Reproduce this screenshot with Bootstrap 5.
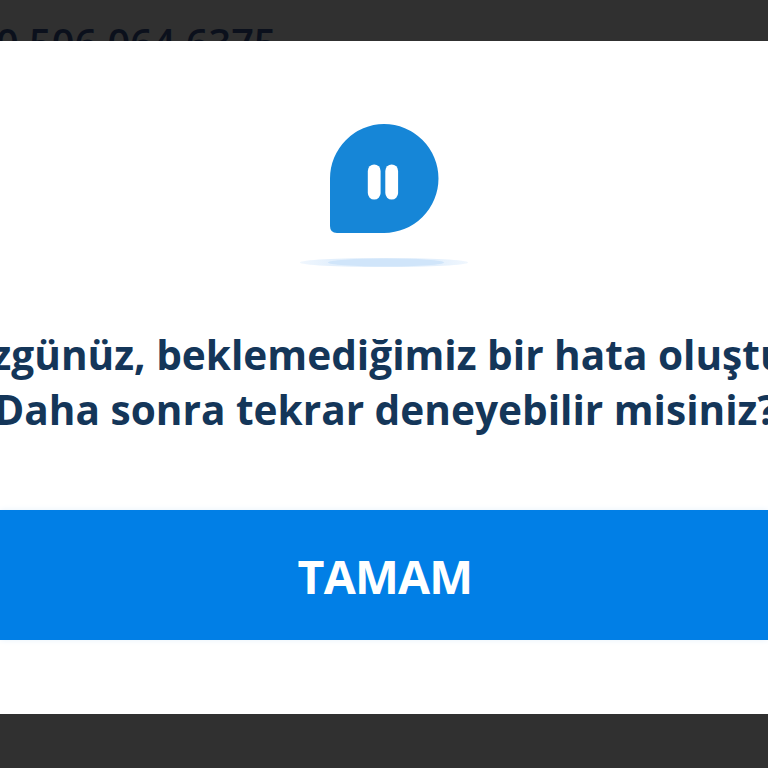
<!DOCTYPE html>
<html lang="tr">
<head>
  <meta charset="UTF-8" />
  <meta name="viewport" content="width=device-width, initial-scale=1.0" />
  <title>Hata</title>
  <link href="https://cdn.jsdelivr.net/npm/bootstrap@5.3.2/dist/css/bootstrap.min.css" rel="stylesheet" />
  <script src="https://cdn.jsdelivr.net/npm/bootstrap@5.3.2/dist/js/bootstrap.bundle.min.js"></script>
  <style>
    body {
      font-family: "Open Sans", "Noto Sans", sans-serif;
      background: #303030;
      height: 768px;
    }

    .phone-line {
      height: 41px;
      padding-top: 23px;
      font-size: 39.7px;
      line-height: 41px;
      font-weight: 600;
      color: #0b101c;
    }

    .phone-line span {
      margin-left: -4px;
    }

    .dialog-panel {
      height: 673px;
      padding-top: 83px;
    }

    .dialog-text {
      margin-top: 59px;
      font-size: 40.6px;
      line-height: 55px;
      font-weight: 700;
      color: #143659;
    }

    /* first line sits slightly left of centre */
    .first-line {
      padding-right: 9px;
    }

    .second-line {
      padding-left: 3px;
    }

    .btn-ok {
      height: 130px;
      margin-top: 73px;
      padding-top: 4px;
      padding-left: 8px;
      font-size: 46.5px;
      letter-spacing: -0.8px;
      font-weight: 700;
      background-color: #017fe6;
      box-shadow: 0 0 6px #e6f1fb;
    }
  </style>
</head>
<body class="d-flex flex-column overflow-hidden">
  <div class="phone-line overflow-hidden text-nowrap"><span>0 506 064 6375</span></div>

  <div class="dialog-panel bg-white d-flex flex-column align-items-center overflow-hidden">
    <svg width="170" height="144" viewBox="299 124 170 144">
      <defs>
        <linearGradient id="shadowFade">
          <stop offset="0" stop-color="#e6f1fd" stop-opacity=".6"/>
          <stop offset=".2" stop-color="#e2effc"/>
          <stop offset=".8" stop-color="#e2effc"/>
          <stop offset="1" stop-color="#e6f1fd" stop-opacity=".6"/>
        </linearGradient>
      </defs>
      <path d="M384 124a54.500 54.500 0 0 1 0 109h-47q-7 0-7-7v-47.500a54.500 54.500 0 0 1 54-54.500z" fill="#1686d7"/>
      <rect x="367.800" y="164.500" width="12.800" height="35" rx="6.400" fill="#fff"/>
      <rect x="385.300" y="164.500" width="12.800" height="35" rx="6.400" fill="#fff"/>
      <ellipse cx="384" cy="262.500" rx="84" ry="4.500" fill="url(#shadowFade)"/>
      <ellipse cx="386" cy="262.500" rx="58" ry="4" fill="#d0e5fa"/>
    </svg>
    <div class="dialog-text text-center text-nowrap">
      <div class="first-line">Üzgünüz, beklemediğimiz bir hata oluştu.</div>
      <div class="second-line">Daha sonra tekrar deneyebilir misiniz?</div>
    </div>
    <button type="button" class="btn-ok w-100 border-0 text-white flex-shrink-0">TAMAM</button>
  </div>
</body>
</html>
